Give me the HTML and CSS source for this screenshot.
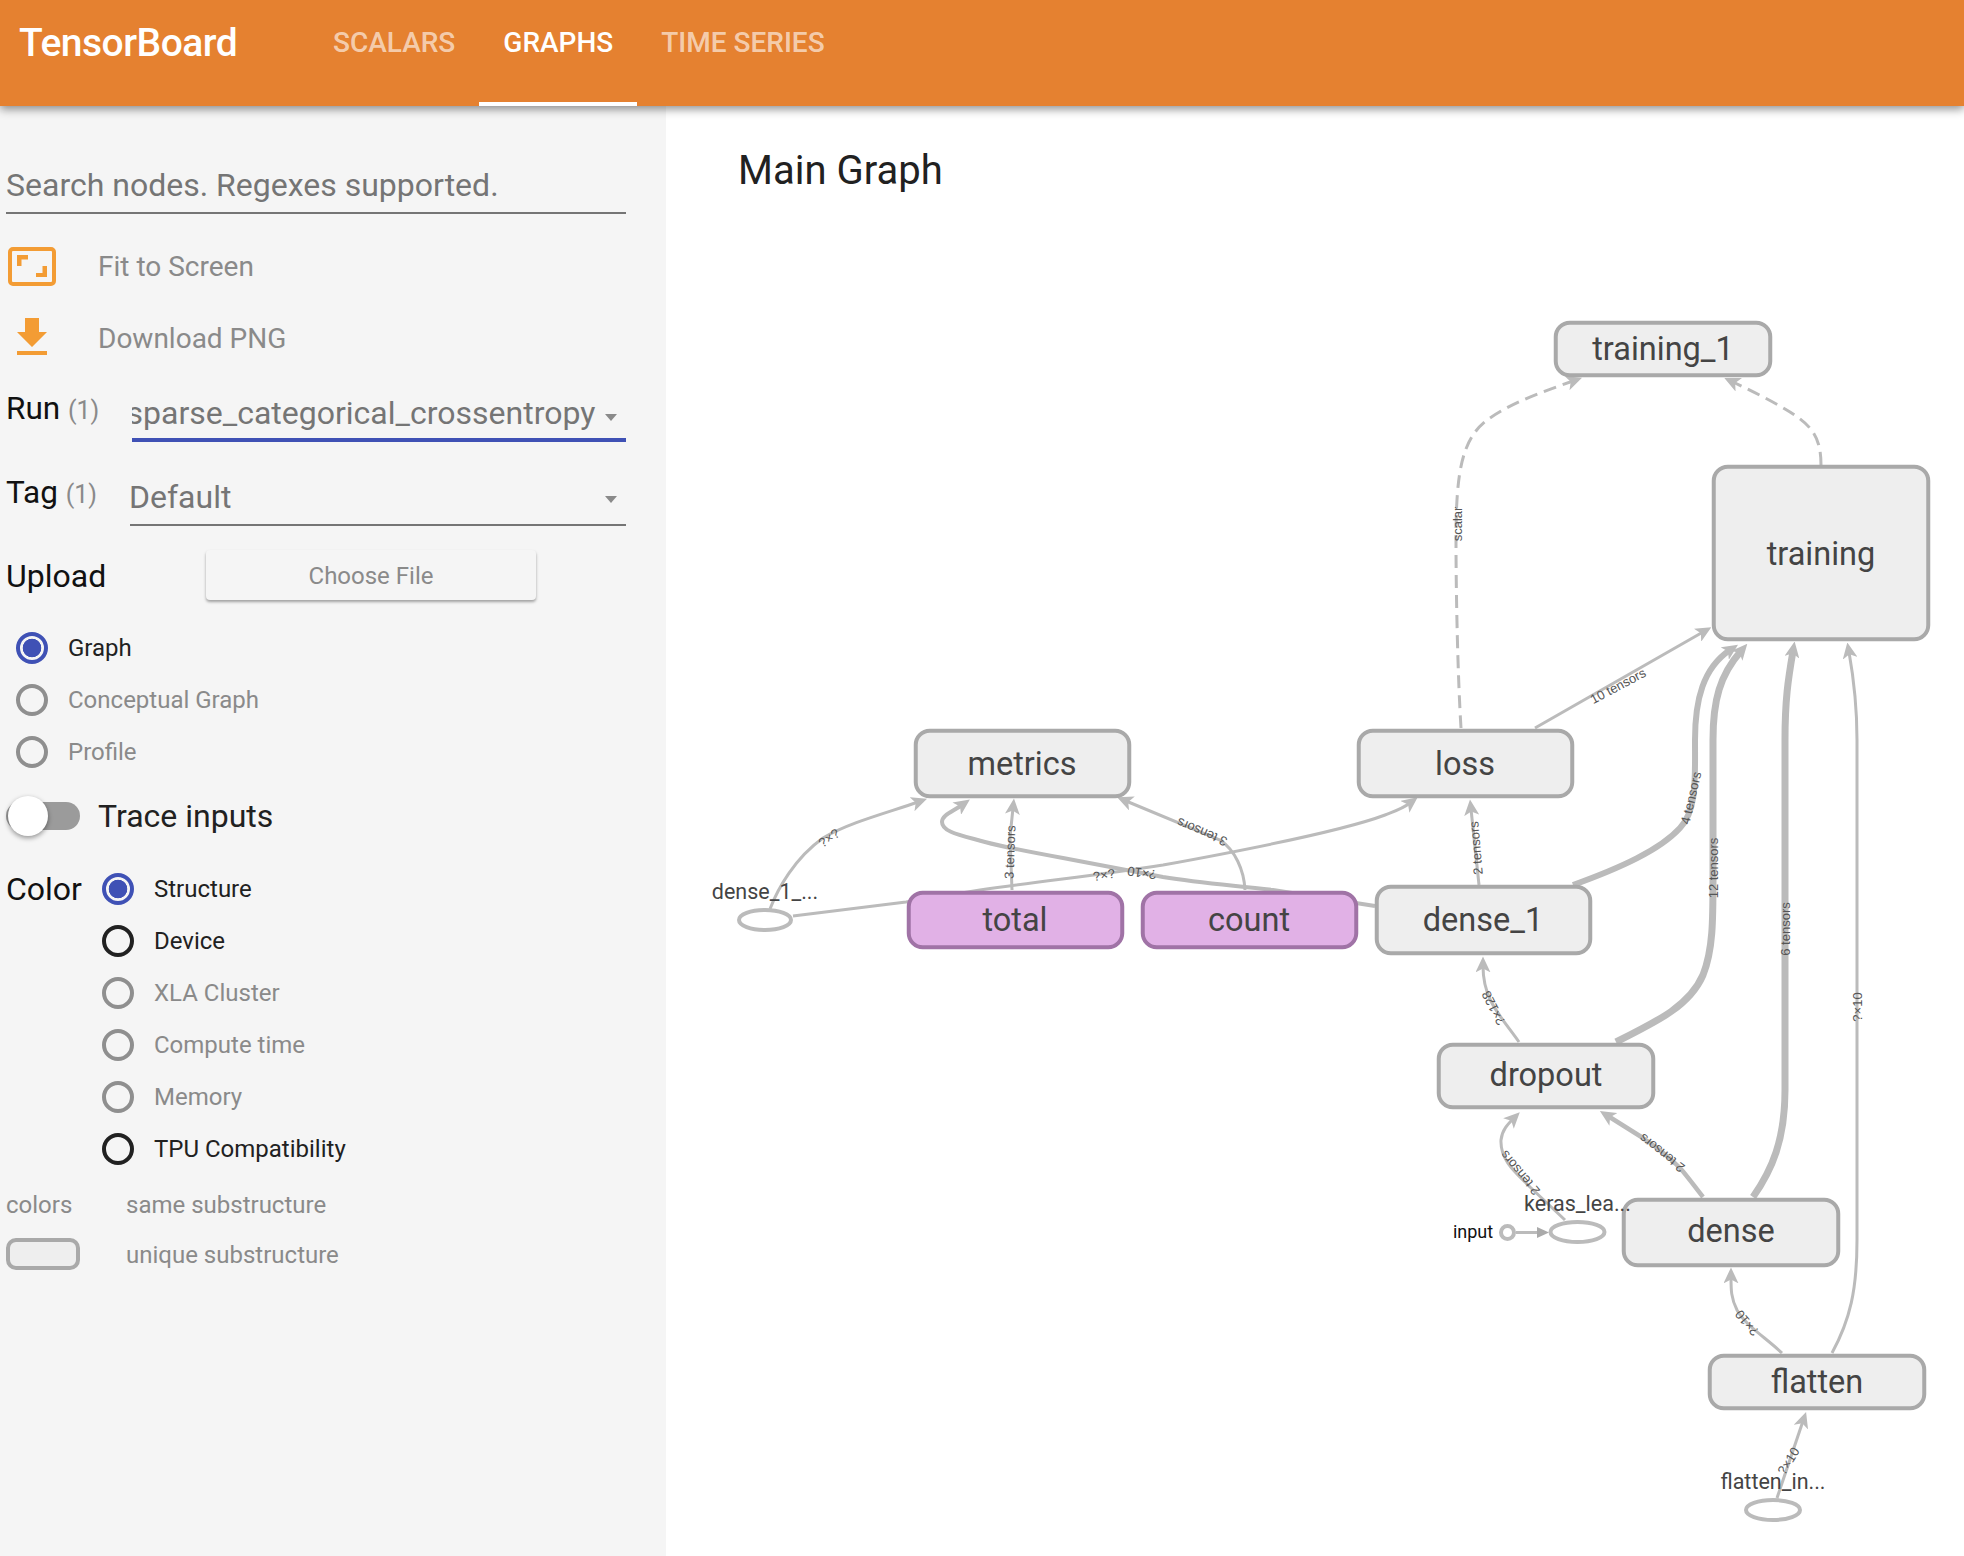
FILE: index.html
```html
<!DOCTYPE html>
<html lang="en">
<head>
<meta charset="utf-8">
<title>TensorBoard</title>
<link rel="stylesheet" href="styles.css">
</head>
<body>
<header class="topbar">
  <div class="brand">TensorBoard</div>
  <nav class="tabs">
    <div class="tab">SCALARS</div>
    <div class="tab tab-active">GRAPHS</div>
    <div class="tab">TIME SERIES</div>
  </nav>
</header>
<div class="layout">
  <aside class="sidebar">
    <div class="search">Search nodes. Regexes supported.</div>
    <div class="action">
      <div class="action-icon">
        <svg class="icon" width="48" height="39" viewBox="0 0 48 39">
          <rect x="2" y="2" width="44" height="35" rx="3" class="icon-line"/>
          <path d="M9 8h11v4.500h-6.500V19H9zM39 30H28v-4h6.500v-7H39z" class="icon-fill"/>
        </svg>
      </div>
      <div class="action-label">Fit to Screen</div>
    </div>
    <div class="action">
      <div class="action-icon">
        <svg class="icon" width="48" height="40" viewBox="0 0 48 40">
          <path d="M17 0h14v14h8L24 29 9 14h8zM9 33h30v4H9z" class="icon-fill"/>
        </svg>
      </div>
      <div class="action-label">Download PNG</div>
    </div>
    <div class="field field-run">
      <div class="field-label">Run <span class="count">(1)</span></div>
      <div class="select select-active">
        <span class="select-value select-clip">sparse_categorical_crossentropy</span>
        <span class="caret"></span>
      </div>
    </div>
    <div class="field field-tag">
      <div class="field-label">Tag <span class="count">(1)</span></div>
      <div class="select select-plain">
        <span class="select-value">Default</span>
        <span class="caret"></span>
      </div>
    </div>
    <div class="upload">
      <div class="upload-label">Upload</div>
      <div class="button">Choose File</div>
    </div>
    <div class="radios radios-mode">
      <div class="radio-row on"><span class="radio"></span><span>Graph</span></div>
      <div class="radio-row"><span class="radio"></span><span>Conceptual Graph</span></div>
      <div class="radio-row"><span class="radio"></span><span>Profile</span></div>
    </div>
    <div class="toggle-row">
      <div class="toggle"><span class="thumb"></span></div>
      <div class="toggle-label">Trace inputs</div>
    </div>
    <div class="color">
      <div class="color-label">Color</div>
      <div class="radios">
        <div class="radio-row on"><span class="radio"></span><span>Structure</span></div>
        <div class="radio-row dark"><span class="radio"></span><span>Device</span></div>
        <div class="radio-row"><span class="radio"></span><span>XLA Cluster</span></div>
        <div class="radio-row"><span class="radio"></span><span>Compute time</span></div>
        <div class="radio-row"><span class="radio"></span><span>Memory</span></div>
        <div class="radio-row dark"><span class="radio"></span><span>TPU Compatibility</span></div>
      </div>
    </div>
    <div class="legend">
      <div class="legend-row"><div class="legend-key">colors</div><div>same substructure</div></div>
      <div class="legend-row"><div class="legend-key"><span class="swatch"></span></div><div>unique substructure</div></div>
    </div>
  </aside>
  <main class="main">
    <h1 class="graph-title">Main Graph</h1>
    <svg class="graph" width="1298" height="1450" viewBox="666 106 1298 1450">
      <defs>
        <marker id="arrow" markerUnits="userSpaceOnUse" markerWidth="16" markerHeight="15" viewBox="0 0 10 10" refX="4" refY="5" orient="auto" preserveAspectRatio="none">
          <path d="M0 0L10 5L0 10L2.500 5z" class="arrowhead"/>
        </marker>
        <marker id="arrow-solid" markerUnits="userSpaceOnUse" markerWidth="12" markerHeight="11" viewBox="0 0 10 10" refX="0" refY="5" orient="auto" preserveAspectRatio="none">
          <path d="M0 0L10 5L0 10z" class="arrowhead-solid"/>
        </marker>
      </defs>
      <g class="edges">
        <path class="edge w3 dash" marker-end="url(#arrow)" d="M1461 728C1458 680 1456 600 1456 540C1456 470 1462 437 1490 418C1515 401 1545 391 1573 381"/>
        <path class="edge w3 dash" marker-end="url(#arrow)" d="M1821 465C1821 435 1810 425 1790 412C1772 401 1752 391 1733 382"/>
        <path class="edge w3" marker-end="url(#arrow)" d="M1535 728L1703 632"/>
        <path class="edge w6" marker-end="url(#arrow)" d="M1573 885C1620 868 1660 850 1680 828C1697 810 1695 780 1695 740C1695 700 1703 668 1730 650"/>
        <path class="edge w7" marker-end="url(#arrow)" d="M1616 1042C1660 1020 1690 1005 1703 975C1713 950 1713 920 1713 880L1713 740C1713 700 1720 675 1741 651"/>
        <path class="edge w7" marker-end="url(#arrow)" d="M1753 1197C1772 1170 1785 1140 1785 1090L1785 740C1785 700 1788 680 1793 651"/>
        <path class="edge w3" marker-end="url(#arrow)" d="M1832 1353C1850 1320 1857 1290 1857 1240L1857 740C1857 705 1854 680 1849 652"/>
        <path class="edge w3" marker-end="url(#arrow)" d="M1479 885L1471 809"/>
        <path class="edge w3" marker-end="url(#arrow)" d="M1519 1042C1500 1015 1483 1000 1483 966"/>
        <path class="edge w3" marker-end="url(#arrow)" d="M1565 1220L1530 1187C1515 1172 1500 1160 1501 1140C1502 1130 1508 1124 1513 1119"/>
        <path class="edge w45" marker-end="url(#arrow)" d="M1703 1197C1695 1187 1688 1177 1680 1168C1668 1156 1655 1146 1643 1138L1608 1116"/>
        <path class="edge w3" marker-end="url(#arrow)" d="M1782 1353C1765 1337 1745 1325 1737 1310C1731 1298 1731 1290 1731 1277"/>
        <path class="edge w3" marker-end="url(#arrow)" d="M1777 1498L1803 1421"/>
        <path class="edge w3" marker-end="url(#arrow-solid)" d="M1516 1232.500L1537 1232.500"/>
        <path class="edge w3" marker-end="url(#arrow)" d="M770 909C778 888 795 858 823 838C850 822 890 812 918 802"/>
        <path class="edge w3" marker-end="url(#arrow)" d="M1012 890L1010 837L1013 808"/>
        <path class="edge w3" marker-end="url(#arrow)" d="M1245 890C1244 870 1235 850 1220 840L1126 801"/>
        <path class="edge w4" marker-end="url(#arrow)" d="M1375 906L1273 890C1230 885 1200 883 1163 877L1063 858C1030 852 1000 846 985 842C960 835 942 832 942 822C942 815 952 812 962 805"/>
        <path class="edge w3" marker-end="url(#arrow)" d="M793 916L906 902L980 890C1050 880 1100 875 1163 865C1240 851 1340 832 1385 815C1395 811 1402 809 1410 803"/>
      </g>
      <g class="leaves">
        <ellipse class="leaf" cx="765" cy="920" rx="26" ry="10"/>
        <ellipse class="leaf" cx="1577.500" cy="1232" rx="27" ry="10"/>
        <circle class="leaf" cx="1507.500" cy="1232.500" r="6.500"/>
        <ellipse class="leaf" cx="1773" cy="1510" rx="27" ry="10"/>
      </g>
      <g class="nodes">
        <rect class="node" x="1555.750" y="322.750" width="214.500" height="52.500" rx="14"/>
        <rect class="node" x="1713.750" y="466.750" width="214.500" height="172.500" rx="14"/>
        <rect class="node" x="915.750" y="730.750" width="213.500" height="65.500" rx="14"/>
        <rect class="node" x="1358.750" y="730.750" width="213.500" height="65.500" rx="14"/>
        <rect class="node pink" x="908.750" y="892.750" width="213.500" height="54.500" rx="14"/>
        <rect class="node pink" x="1142.750" y="892.750" width="213.500" height="54.500" rx="14"/>
        <rect class="node" x="1376.750" y="886.750" width="213.500" height="66.500" rx="14"/>
        <rect class="node" x="1438.750" y="1044.750" width="214.500" height="62.500" rx="14"/>
        <rect class="node" x="1623.750" y="1199.750" width="214.500" height="65.500" rx="14"/>
        <rect class="node" x="1709.750" y="1355.750" width="214.500" height="52.500" rx="14"/>
      </g>
      <g class="node-labels">
        <text x="1663" y="349">training_1</text>
        <text x="1821" y="554">training</text>
        <text x="1022" y="764">metrics</text>
        <text x="1465" y="764">loss</text>
        <text x="1015" y="920">total</text>
        <text x="1249" y="920">count</text>
        <text x="1483" y="920">dense_1</text>
        <text x="1546" y="1075">dropout</text>
        <text x="1731" y="1231">dense</text>
        <text x="1817" y="1382">flatten</text>
      </g>
      <g class="leaf-labels">
        <text x="765" y="891">dense_1_...</text>
        <text x="1577.500" y="1203">keras_lea...</text>
        <text x="1773" y="1481">flatten_in...</text>
      </g>
      <text class="input-label" x="1473" y="1231">input</text>
      <g class="edge-labels">
        <text transform="translate(1457.500 524) rotate(-90)">scalar</text>
        <text transform="translate(1618 686) rotate(-28)">10 tensors</text>
        <text transform="translate(1691 798) rotate(-77)">4 tensors</text>
        <text transform="translate(1713 868) rotate(-90)">12 tensors</text>
        <text transform="translate(1785 929) rotate(-90)">6 tensors</text>
        <text transform="translate(1857 1007) rotate(-90)">?×10</text>
        <text transform="translate(1476 848) rotate(-95)">2 tensors</text>
        <text transform="translate(1493.500 1008) rotate(-117)">?×128</text>
        <text transform="translate(1520 1173) rotate(-130)">2 tensors</text>
        <text transform="translate(1662 1153) rotate(-142)">2 tensors</text>
        <text transform="translate(1747 1323) rotate(-130)">?×10</text>
        <text transform="translate(1788.500 1461) rotate(-58)">?×10</text>
        <text transform="translate(829 838) rotate(-35)">?×?</text>
        <text transform="translate(1010 852) rotate(-88)">3 tensors</text>
        <text transform="translate(1202 832) rotate(-157)">3 tensors</text>
        <text transform="translate(1104 875) rotate(-9)">?×?</text>
        <text transform="translate(1142 873) rotate(188)">?×10</text>
      </g>
    </svg>
  </main>
</div>
</body>
</html>
```

FILE: styles.css
```css
* { box-sizing: border-box; }
html, body { margin: 0; padding: 0; height: 1556px; overflow: hidden; background: #fff; }
body { font-family: Roboto, "Liberation Sans", sans-serif; color: #212121; }

.topbar {
  position: relative;
  z-index: 2;
  display: flex;
  height: 106px;
  background: #e58130;
  color: #fff;
  box-shadow: 0 3px 9px rgba(0, 0, 0, .45);
}
.brand { width: 309px; padding: 21px 0 0 19px; font-size: 39px; line-height: 44px; font-weight: 500; letter-spacing: -.5px; }
.tabs { display: flex; }
.tab { padding: 23px 24px 0; font-size: 28px; line-height: 40px; font-weight: 500; color: rgba(255, 255, 255, .62); border-bottom: 4px solid transparent; }
.tab-active { color: #fff; border-bottom-color: #fff; }

.layout { display: flex; height: 1450px; }
.sidebar { width: 666px; flex: none; padding-left: 6px; background: #f5f5f5; color: #8a8a8a; }
.main { position: relative; flex: 1; background: #fff; }

.search { width: 620px; height: 46px; margin-top: 60px; font-size: 32px; line-height: 38px; color: #757575; border-bottom: 2px solid #757575; box-sizing: content-box; }

.action { display: flex; align-items: center; height: 72px; }
.search + .action { margin-top: 16px; }
.action-icon { width: 92px; padding-left: 2px; }
.icon { display: block; }
.icon-line { fill: none; stroke: #f39c34; stroke-width: 4; }
.icon-fill { fill: #f39c34; }
.action-label { font-size: 28px; }

.field { display: flex; height: 66px; }
.field-run { margin-top: 2px; }
.field-tag { margin-top: 18px; }
.field-label { width: 124px; padding-top: 13px; font-size: 31.500px; line-height: 40px; color: #111; white-space: nowrap; flex: none; }
.count { font-size: 25px; color: #8a8a8a; }
.select { display: flex; align-items: flex-end; justify-content: space-between; flex: none; overflow: hidden; }
.select-plain { width: 496px; border-bottom: 2px solid #757575; padding: 0 9px 7.500px 0; }
.select-active { width: 494px; margin-left: 2px; border-bottom: 4px solid #3f51b5; padding: 0 9px 5.500px 0; }
.select-value { font-size: 32px; line-height: 40px; color: #757575; white-space: nowrap; }
.select-plain .select-value { margin-left: -1px; }
.select-clip { margin-left: -5.500px; }
.caret { width: 0; height: 0; flex: none; border-left: 6px solid transparent; border-right: 6px solid transparent; border-top: 7px solid #8a8a8a; }
.select-active .caret { margin-bottom: 11.500px; }
.select-plain .caret { margin-bottom: 13.500px; }

.upload { display: flex; align-items: center; height: 50px; margin-top: 24px; }
.upload-label { width: 200px; padding-top: 2px; font-size: 32px; color: #111; }
.button { display: flex; align-items: center; justify-content: center; width: 330px; height: 50px; padding-top: 1px; background: #f5f5f5; border-radius: 4px; font-size: 24px; color: #8a8a8a; box-shadow: 0 2px 3px rgba(0, 0, 0, .35); }

.radios { display: flex; flex-direction: column; }
.radios-mode { margin-top: 22px; padding-left: 10px; }
.radio-row { display: flex; align-items: center; gap: 20px; height: 52px; font-size: 24px; color: #8a8a8a; }
.radio { width: 32px; height: 32px; border: 4px solid #8f8f8f; border-radius: 50%; flex: none; }
.radio-row.dark { color: #212121; }
.radio-row.dark .radio { border-color: #212121; }
.radio-row.on { color: #212121; }
.radio-row.on .radio { border-color: #3f51b5; background: radial-gradient(circle, #3f51b5 0 9px, transparent 9.600px); }

.toggle-row { display: flex; align-items: center; height: 52px; margin-top: 12px; }
.toggle { position: relative; width: 74px; height: 28px; background: #9b9b9b; border-radius: 14px; flex: none; }
.thumb { position: absolute; left: 2px; top: -6px; width: 40px; height: 40px; border-radius: 50%; background: #fff; box-shadow: 0 2px 5px rgba(0, 0, 0, .4); }
.toggle-label { margin-left: 18px; font-size: 32px; color: #212121; }

.color { display: flex; margin-top: 21px; }
.color-label { width: 96px; font-size: 32px; line-height: 52px; color: #111; flex: none; }

.legend { margin-top: 10px; font-size: 24px; color: #8a8a8a; }
.legend-row { display: flex; align-items: center; height: 40px; margin-bottom: 10px; }
.legend-key { width: 120px; }
.swatch { display: block; width: 74px; height: 32px; margin-bottom: 2px; border: 4px solid #a9a9a9; border-radius: 10px; background: #eee; }

.graph-title { position: relative; margin: 0; padding: 45px 0 0 72px; font-size: 40px; line-height: 40px; font-weight: 400; color: #212121; }
.graph { position: absolute; left: 0; top: 0; }

.edge { fill: none; stroke: #bbb; }
.w3 { stroke-width: 3; }
.w4 { stroke-width: 4; }
.w45 { stroke-width: 4.500; }
.w6 { stroke-width: 6; }
.w7 { stroke-width: 7; }
.dash { stroke-dasharray: 13 7; }
.arrowhead { fill: #bbb; }
.arrowhead-solid { fill: #aaa; }
.leaf { fill: #fff; stroke: #bbb; stroke-width: 4; }
.node { fill: #eee; stroke: #a9a9a9; stroke-width: 4; }
.node.pink { fill: #e1b1e6; stroke: #a073a6; }
.node-labels text { font-family: Roboto, sans-serif; font-size: 32.500px; fill: #444; text-anchor: middle; dominant-baseline: central; }
.leaf-labels text { font-family: Roboto, sans-serif; font-size: 21.500px; fill: #444; text-anchor: middle; dominant-baseline: central; }
.input-label { font-family: Roboto, sans-serif; font-size: 18px; fill: #111; text-anchor: middle; dominant-baseline: central; }
.edge-labels text { font-family: "Liberation Sans", sans-serif; font-size: 13px; fill: #555; text-anchor: middle; dominant-baseline: central; }
```
